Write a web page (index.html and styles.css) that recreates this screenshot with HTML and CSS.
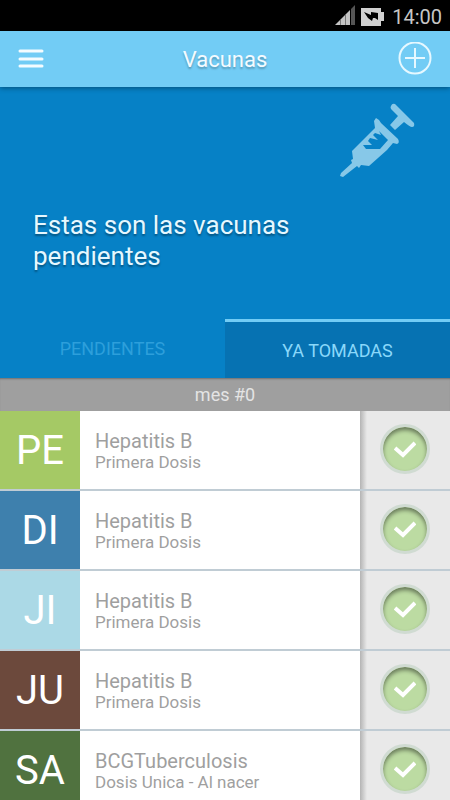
FILE: index.html
```html
<!DOCTYPE html>
<html lang="es">

<head>
    <meta charset="UTF-8">
    <meta name="viewport" content="width=device-width, initial-scale=1.0">
    <title>Vacunas</title>
    <link rel="stylesheet" href="styles.css">
</head>

<body>
    <div class="status-bar">
        <svg class="signal" width="20" height="20" viewBox="0 0 20 20">
            <path fill="#c4c4c4" d="M0 20L15 5V20z" />
            <path fill="#555" d="M16 4L20 0V20H16z" />
            <path stroke="#777" d="M5.500 15V20M10.500 10V20" />
        </svg>
        <svg class="battery" width="23" height="18" viewBox="0 0 23 18">
            <path fill="#d0d0d0" d="M0 0H20V4H23V13H20V18H0z" />
            <path fill="#000" d="M3 4L10 7L10 4L17 5V12L14 10L12 10L11 13L7 10z" />
        </svg>
        <span class="clock">14:00</span>
    </div>

    <header class="app-bar">
        <button type="button" class="icon-btn" aria-label="Menú">
            <svg width="26" height="20" viewBox="0 0 26 20">
                <path stroke="#f4fcff" stroke-width="3" stroke-linecap="round" d="M2 2H24M2 10H24M2 17H24" />
            </svg>
        </button>
        <h1>Vacunas</h1>
        <button type="button" class="icon-btn" aria-label="Agregar">
            <svg width="34" height="34" viewBox="0 0 34 34" fill="none" stroke="#e6f8ff">
                <circle cx="17" cy="16" r="15.500" stroke-width="2" />
                <path stroke-width="2" d="M17 6V26M7 16H27" />
            </svg>
        </button>
    </header>

    <section class="hero">
        <svg class="syringe" width="76" height="74" viewBox="0 0 76 74" fill="#87c8e8">
            <path d="M51 3Q52 0 55 1L74 20Q75 24 72 24Q70 24 64 19L55 27L50 22L58 13L51 6Q50 4 51 3z" />
            <path fill-rule="evenodd" d="M36 15L39 17L41 20L58 36Q60 40 57 41L53 40L47 47L29 63L21 62L19 65L17 63L3 74L0 73L1 70L12 60L11 57L13 56L12 48L35 25L34 18zM39 28L48 37L40 46H26L23 42H32L28 38L30 35L38 37L33 32L35 30L41 32z" />
        </svg>
        <p>Estas son las vacunas pendientes</p>
    </section>

    <nav class="tabs">
        <button type="button" class="tab">PENDIENTES</button>
        <button type="button" class="tab active">YA TOMADAS</button>
    </nav>

    <main>
        <h2>mes #0</h2>

        <ul class="vaccines">
            <li>
                <span class="initials green">PE</span>
                <div class="info">
                    <h3>Hepatitis B</h3>
                    <p>Primera Dosis</p>
                </div>
                <div class="done">
                    <button type="button" class="check" aria-label="Tomada">
                        <svg width="22" height="18" viewBox="0 0 22 18"><path d="M1 8L9 15L21 3" /></svg>
                    </button>
                </div>
            </li>
            <li>
                <span class="initials blue">DI</span>
                <div class="info">
                    <h3>Hepatitis B</h3>
                    <p>Primera Dosis</p>
                </div>
                <div class="done">
                    <button type="button" class="check" aria-label="Tomada">
                        <svg width="22" height="18" viewBox="0 0 22 18"><path d="M1 8L9 15L21 3" /></svg>
                    </button>
                </div>
            </li>
            <li>
                <span class="initials sky">JI</span>
                <div class="info">
                    <h3>Hepatitis B</h3>
                    <p>Primera Dosis</p>
                </div>
                <div class="done">
                    <button type="button" class="check" aria-label="Tomada">
                        <svg width="22" height="18" viewBox="0 0 22 18"><path d="M1 8L9 15L21 3" /></svg>
                    </button>
                </div>
            </li>
            <li>
                <span class="initials brown">JU</span>
                <div class="info">
                    <h3>Hepatitis B</h3>
                    <p>Primera Dosis</p>
                </div>
                <div class="done">
                    <button type="button" class="check" aria-label="Tomada">
                        <svg width="22" height="18" viewBox="0 0 22 18"><path d="M1 8L9 15L21 3" /></svg>
                    </button>
                </div>
            </li>
            <li>
                <span class="initials forest">SA</span>
                <div class="info">
                    <h3>BCGTuberculosis</h3>
                    <p>Dosis Unica - Al nacer</p>
                </div>
                <div class="done">
                    <button type="button" class="check" aria-label="Tomada">
                        <svg width="22" height="18" viewBox="0 0 22 18"><path d="M1 8L9 15L21 3" /></svg>
                    </button>
                </div>
            </li>
        </ul>
    </main>
</body>

</html>
```
FILE: styles.css
```css
* {
    box-sizing: border-box;
}

body {
    margin: 0;
    height: 100vh;
    display: flex;
    flex-direction: column;
    overflow: hidden;
    font-family: Roboto, "Liberation Sans", sans-serif;
    background-color: #fff;
}

h1, h2, h3, p, ul {
    margin: 0;
    padding: 0;
    font-weight: normal;
}

button {
    padding: 0;
    border: none;
    background: none;
    font-family: inherit;
    cursor: pointer;
}

svg {
    display: block;
}

.status-bar {
    flex: none;
    display: flex;
    align-items: center;
    justify-content: flex-end;
    height: 31px;
    padding: 2px 8px 0 0;
    background-color: #000;
}

.signal {
    margin-bottom: 4px;
}

.battery {
    margin: 0 8px 0 6px;
}

.clock {
    font-size: 20px;
    color: #c6c6c6;
}

.app-bar {
    flex: none;
    position: relative;
    display: flex;
    align-items: center;
    justify-content: space-between;
    height: 56px;
    padding: 0 18px;
    background-color: #72ccf5;
    box-shadow: 0 1px 5px rgba(0, 0, 0, 0.4);
}

.icon-btn {
    display: flex;
    width: 34px;
}

.app-bar h1 {
    font-size: 22px;
    color: #f4fbff;
    text-shadow: 0 2px 2px rgba(0, 0, 0, 0.25);
}

.hero {
    flex: none;
    display: flex;
    flex-direction: column;
    height: 232px;
    padding: 16px 34px 0 33px;
    background-color: #0681c6;
}

.syringe {
    align-self: flex-end;
}

.hero p {
    max-width: 300px;
    margin-top: 33px;
    font-size: 26px;
    line-height: 31px;
    color: #e6f8ff;
    text-shadow: 0 2px 2px rgba(0, 0, 0, 0.35);
}

.tabs {
    flex: none;
    display: flex;
    height: 59px;
    background-color: #0681c6;
}

.tab {
    flex: 1;
    font-size: 18px;
    color: #2d9fdb;
}

.tab.active {
    border-top: 3px solid #72ccf5;
    background-color: #0672b2;
    color: #8ad8fa;
}

main {
    flex: 1;
    min-height: 0;
    overflow: hidden;
}

h2 {
    height: 33px;
    font-size: 18px;
    line-height: 34px;
    text-align: center;
    color: #e4e4e4;
    background-color: #9f9f9f;
    box-shadow: inset 0 2px 2px -1px rgba(0, 0, 0, 0.3);
}

.vaccines {
    list-style: none;
}

.vaccines li {
    display: flex;
    height: 80px;
    border-bottom: 2px solid #c0ccd4;
}

.initials {
    width: 80px;
    font-size: 40px;
    line-height: 80px;
    text-align: center;
    color: #fff;
}

.green {
    background-color: #a5c965;
}

.blue {
    background-color: #3e80ad;
}

.sky {
    background-color: #abd9e6;
}

.brown {
    background-color: #6c493c;
}

.forest {
    background-color: #50723f;
}

.info {
    flex: 1;
    padding: 19px 15px 0;
    color: #9f9f9f;
}

.info h3 {
    font-size: 20px;
    line-height: 22px;
}

.info p {
    font-size: 17px;
    line-height: 20px;
}

.done {
    display: flex;
    align-items: center;
    justify-content: center;
    width: 90px;
    padding-bottom: 2px;
    background: linear-gradient(to right, #b4b4b4, #e9e9e9 7px);
}

.check {
    display: flex;
    align-items: center;
    justify-content: center;
    width: 50px;
    height: 50px;
    border: 3px solid #d0dbd2;
    border-radius: 50%;
    background-color: #bcdba2;
    box-shadow: inset 0 3px 4px rgba(0, 0, 0, 0.45);
}

.check path {
    fill: none;
    stroke: #fff;
    stroke-width: 4;
}
```
